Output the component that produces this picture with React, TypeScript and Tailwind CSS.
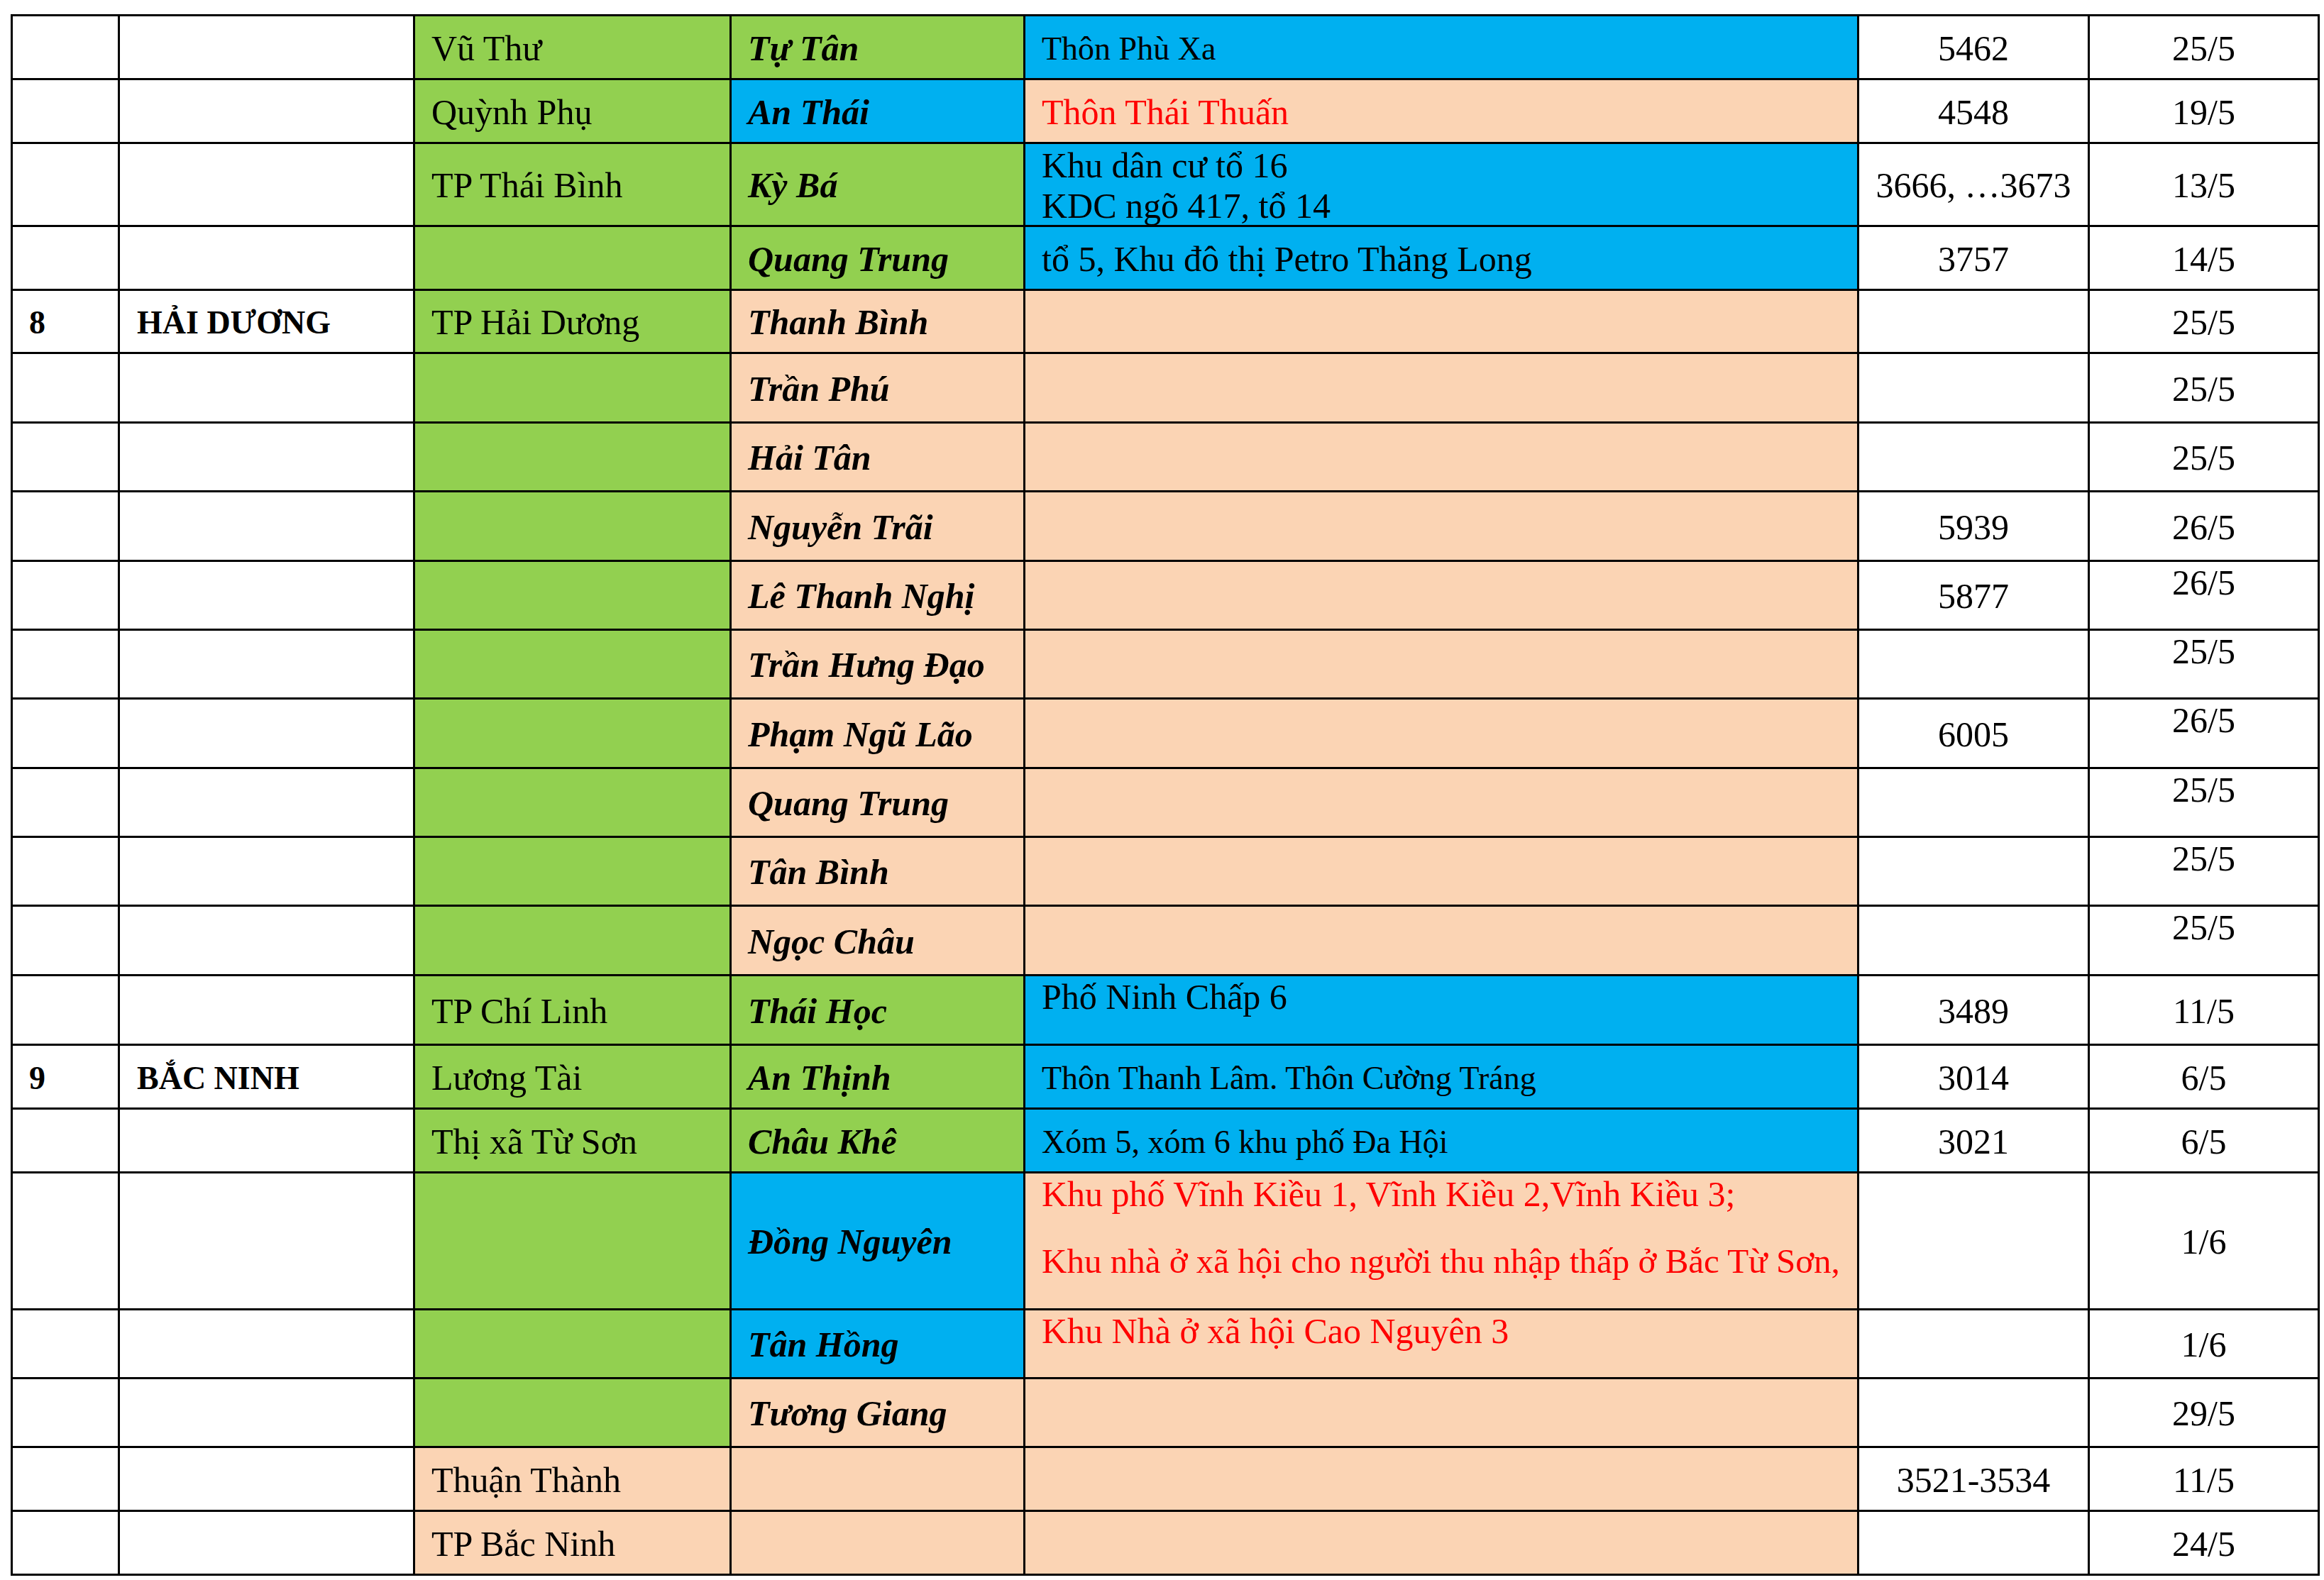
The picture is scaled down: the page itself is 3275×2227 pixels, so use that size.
import clsx from "clsx";
import type { ReactNode } from "react";

type Bg = "w" | "g" | "b" | "p";

const bgClass: Record<Bg, string> = {
  w: "bg-white",
  g: "bg-[#92d050]",
  b: "bg-[#00b0f0]",
  p: "bg-[#fbd4b4]",
};

type Row = {
  stt?: string;
  tinh?: string;
  huyen: [string, Bg];
  xa: [string, Bg];
  diaChi: { lines: string[]; bg: Bg; red?: boolean; top?: boolean; gap?: boolean; size?: string };
  so?: string;
  ngay: string;
  ngayTop?: boolean;
};

const rows: Row[] = [
  { huyen: ["Vũ Thư", "g"], xa: ["Tự Tân", "g"], diaChi: { lines: ["Thôn Phù Xa"], bg: "b", size: "text-[46px]" }, so: "5462", ngay: "25/5" },
  { huyen: ["Quỳnh Phụ", "g"], xa: ["An Thái", "b"], diaChi: { lines: ["Thôn Thái Thuấn"], bg: "p", red: true }, so: "4548", ngay: "19/5" },
  {
    huyen: ["TP Thái Bình", "g"],
    xa: ["Kỳ Bá", "g"],
    diaChi: { lines: ["Khu dân cư tổ 16", "KDC ngõ 417, tổ 14"], bg: "b" },
    so: "3666, …3673",
    ngay: "13/5",
  },
  { huyen: ["", "g"], xa: ["Quang Trung", "g"], diaChi: { lines: ["tổ 5, Khu đô thị Petro Thăng Long"], bg: "b" }, so: "3757", ngay: "14/5" },
  { stt: "8", tinh: "HẢI DƯƠNG", huyen: ["TP Hải Dương", "g"], xa: ["Thanh Bình", "p"], diaChi: { lines: [], bg: "p" }, ngay: "25/5" },
  { huyen: ["", "g"], xa: ["Trần Phú", "p"], diaChi: { lines: [], bg: "p" }, ngay: "25/5" },
  { huyen: ["", "g"], xa: ["Hải Tân", "p"], diaChi: { lines: [], bg: "p" }, ngay: "25/5" },
  { huyen: ["", "g"], xa: ["Nguyễn Trãi", "p"], diaChi: { lines: [], bg: "p" }, so: "5939", ngay: "26/5" },
  { huyen: ["", "g"], xa: ["Lê Thanh Nghị", "p"], diaChi: { lines: [], bg: "p" }, so: "5877", ngay: "26/5", ngayTop: true },
  { huyen: ["", "g"], xa: ["Trần Hưng Đạo", "p"], diaChi: { lines: [], bg: "p" }, ngay: "25/5", ngayTop: true },
  { huyen: ["", "g"], xa: ["Phạm Ngũ Lão", "p"], diaChi: { lines: [], bg: "p" }, so: "6005", ngay: "26/5", ngayTop: true },
  { huyen: ["", "g"], xa: ["Quang Trung", "p"], diaChi: { lines: [], bg: "p" }, ngay: "25/5", ngayTop: true },
  { huyen: ["", "g"], xa: ["Tân Bình", "p"], diaChi: { lines: [], bg: "p" }, ngay: "25/5", ngayTop: true },
  { huyen: ["", "g"], xa: ["Ngọc Châu", "p"], diaChi: { lines: [], bg: "p" }, ngay: "25/5", ngayTop: true },
  { huyen: ["TP Chí Linh", "g"], xa: ["Thái Học", "g"], diaChi: { lines: ["Phố Ninh Chấp 6"], bg: "b", top: true }, so: "3489", ngay: "11/5" },
  {
    stt: "9",
    tinh: "BẮC NINH",
    huyen: ["Lương Tài", "g"],
    xa: ["An Thịnh", "g"],
    diaChi: { lines: ["Thôn Thanh Lâm. Thôn Cường Tráng"], bg: "b", size: "text-[46px]" },
    so: "3014",
    ngay: "6/5",
  },
  {
    huyen: ["Thị xã Từ Sơn", "g"],
    xa: ["Châu Khê", "g"],
    diaChi: { lines: ["Xóm 5, xóm 6 khu phố Đa Hội"], bg: "b", size: "text-[46px]" },
    so: "3021",
    ngay: "6/5",
  },
  {
    huyen: ["", "g"],
    xa: ["Đồng Nguyên", "b"],
    diaChi: {
      lines: ["Khu phố Vĩnh Kiều 1, Vĩnh Kiều 2,Vĩnh Kiều 3;", "Khu nhà ở xã hội cho người thu nhập thấp ở Bắc Từ Sơn,"],
      bg: "p",
      red: true,
      top: true,
      gap: true,
    },
    ngay: "1/6",
  },
  { huyen: ["", "g"], xa: ["Tân Hồng", "b"], diaChi: { lines: ["Khu Nhà ở xã hội Cao Nguyên 3"], bg: "p", red: true, top: true }, ngay: "1/6" },
  { huyen: ["", "g"], xa: ["Tương Giang", "p"], diaChi: { lines: [], bg: "p" }, ngay: "29/5" },
  { huyen: ["Thuận Thành", "p"], xa: ["", "p"], diaChi: { lines: [], bg: "p" }, so: "3521-3534", ngay: "11/5" },
  { huyen: ["TP Bắc Ninh", "p"], xa: ["", "p"], diaChi: { lines: [], bg: "p" }, ngay: "24/5" },
];

function Cell({
  bg = "w",
  center = false,
  top = false,
  className,
  children,
}: {
  bg?: Bg;
  center?: boolean;
  top?: boolean;
  className?: string;
  children?: ReactNode;
}) {
  return (
    <div
      className={clsx(
        "flex min-w-0",
        bgClass[bg],
        top ? "items-start pt-px" : "items-center pt-[3px]",
        center ? "justify-center" : "pl-[23px]",
        className
      )}
    >
      {children}
    </div>
  );
}

export default function App() {
  return (
    <main className="min-h-screen bg-white pl-[15px] pt-[20px] font-['Liberation_Serif','Times_New_Roman',serif] text-[50px] leading-[57px] text-black">
      <div className="grid w-fit grid-cols-[148px_413px_443px_411px_1172px_322px_321px] grid-rows-[87px_87px_114px_87px_86px_95px_94px_95px_94px_94px_95px_94px_94px_95px_95px_87px_87px_190px_94px_94px_87px_87px] gap-[3px] bg-black p-[3px]">
        {rows.map((r, i) => (
          <div key={i} className="contents">
            {/* STT */}
            <Cell className="pl-[22px] text-[46px] font-bold">{r.stt}</Cell>
            {/* TỈNH */}
            <Cell className="pl-[24px] text-[46px] font-bold whitespace-nowrap">{r.tinh}</Cell>
            {/* HUYỆN */}
            <Cell bg={r.huyen[1]} className="whitespace-nowrap">
              {r.huyen[0]}
            </Cell>
            {/* XÃ */}
            <Cell bg={r.xa[1]} className="font-bold italic whitespace-nowrap">
              {r.xa[0]}
            </Cell>
            {/* ĐỊA CHỈ */}
            <Cell
              bg={r.diaChi.bg}
              top={r.diaChi.top}
              className={clsx(r.diaChi.size, r.diaChi.red && "text-[#ff0000]")}
            >
              <div className={clsx("flex flex-col whitespace-nowrap", r.diaChi.gap && "gap-[37px]")}>
                {r.diaChi.lines.map((l, j) => (
                  <p key={j} className={clsx(j === 1 && r.diaChi.gap && "text-[49px]")}>
                    {l}
                  </p>
                ))}
              </div>
            </Cell>
            {/* SỐ */}
            <Cell center className="whitespace-nowrap">
              {r.so}
            </Cell>
            {/* NGÀY */}
            <Cell center top={r.ngayTop}>
              {r.ngay}
            </Cell>
          </div>
        ))}
      </div>
    </main>
  );
}
